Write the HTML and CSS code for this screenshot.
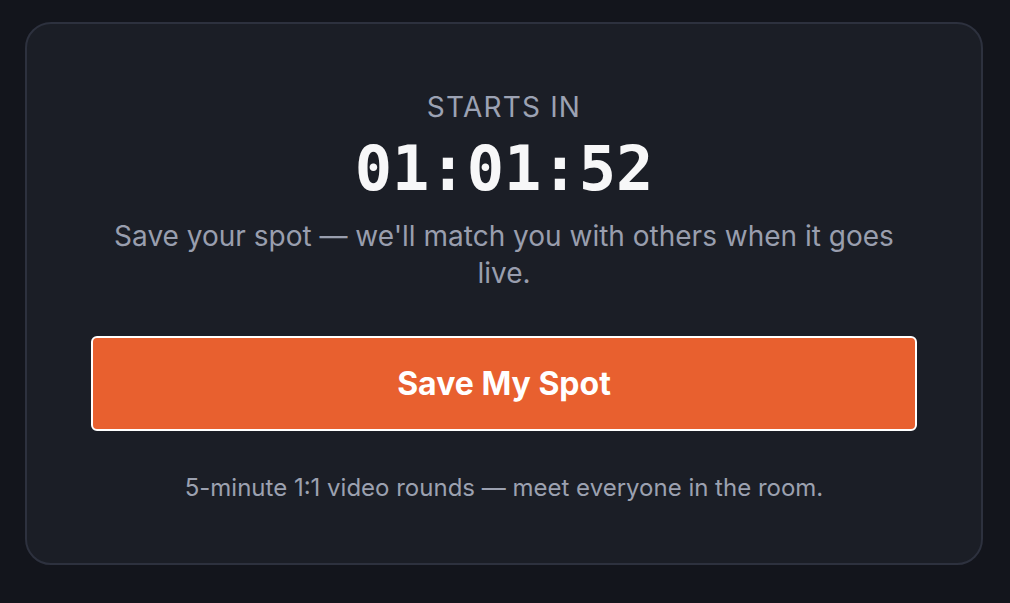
FILE: index.html
```html
<!DOCTYPE html>
<html lang="en">
<head>
    <meta charset="UTF-8">
    <meta name="viewport" content="width=device-width, initial-scale=1.0">
    <title>Starts In</title>
    <link rel="stylesheet" href="styles.css">
</head>
<body>
    <div class="card">
        <p class="label">STARTS IN</p>
        <h1 class="timer">01:01:52</h1>
        <p class="lead">Save your spot — we'll match you with others when it goes live.</p>
        <button class="save">Save My Spot</button>
        <p class="note">5-minute 1:1 video rounds — meet everyone in the room.</p>
    </div>
</body>
</html>
```

FILE: styles.css
```css
body {
    font-family: Inter, "Noto Sans", sans-serif;
    background-color: #13151c;
    margin: 0;
    padding: 22px 27px 0 25px;
}

.card {
    background-color: #1b1e26;
    border: 2px solid #2d313e;
    border-radius: 26px;
    height: 539px;
    padding: 0 64px;
    display: flex;
    flex-direction: column;
    align-items: center;
    text-align: center;
}

.label {
    margin: 67px 0 0;
    font-size: 28px;
    line-height: 32px;
    letter-spacing: 1.2px;
    color: #9ca2b3;
}

.timer {
    margin: 10px 0 0;
    font-family: "DejaVu Sans Mono", monospace;
    font-weight: bold;
    font-size: 62px;
    line-height: 72px;
    color: #f7f7f8;
}

.lead {
    margin: 13px 0 0;
    font-size: 28px;
    line-height: 37px;
    color: #999eae;
}

.save {
    margin-top: 44px;
    width: 100%;
    height: 95px;
    flex-shrink: 0;
    background-color: #e8602f;
    color: #ffffff;
    border: 2px solid #ffffff;
    border-radius: 6px;
    font-family: inherit;
    font-weight: bold;
    font-size: 32px;
    cursor: pointer;
}

.note {
    margin: 42px 0 0;
    font-size: 24px;
    line-height: 30px;
    color: #9ca1b0;
}
```
